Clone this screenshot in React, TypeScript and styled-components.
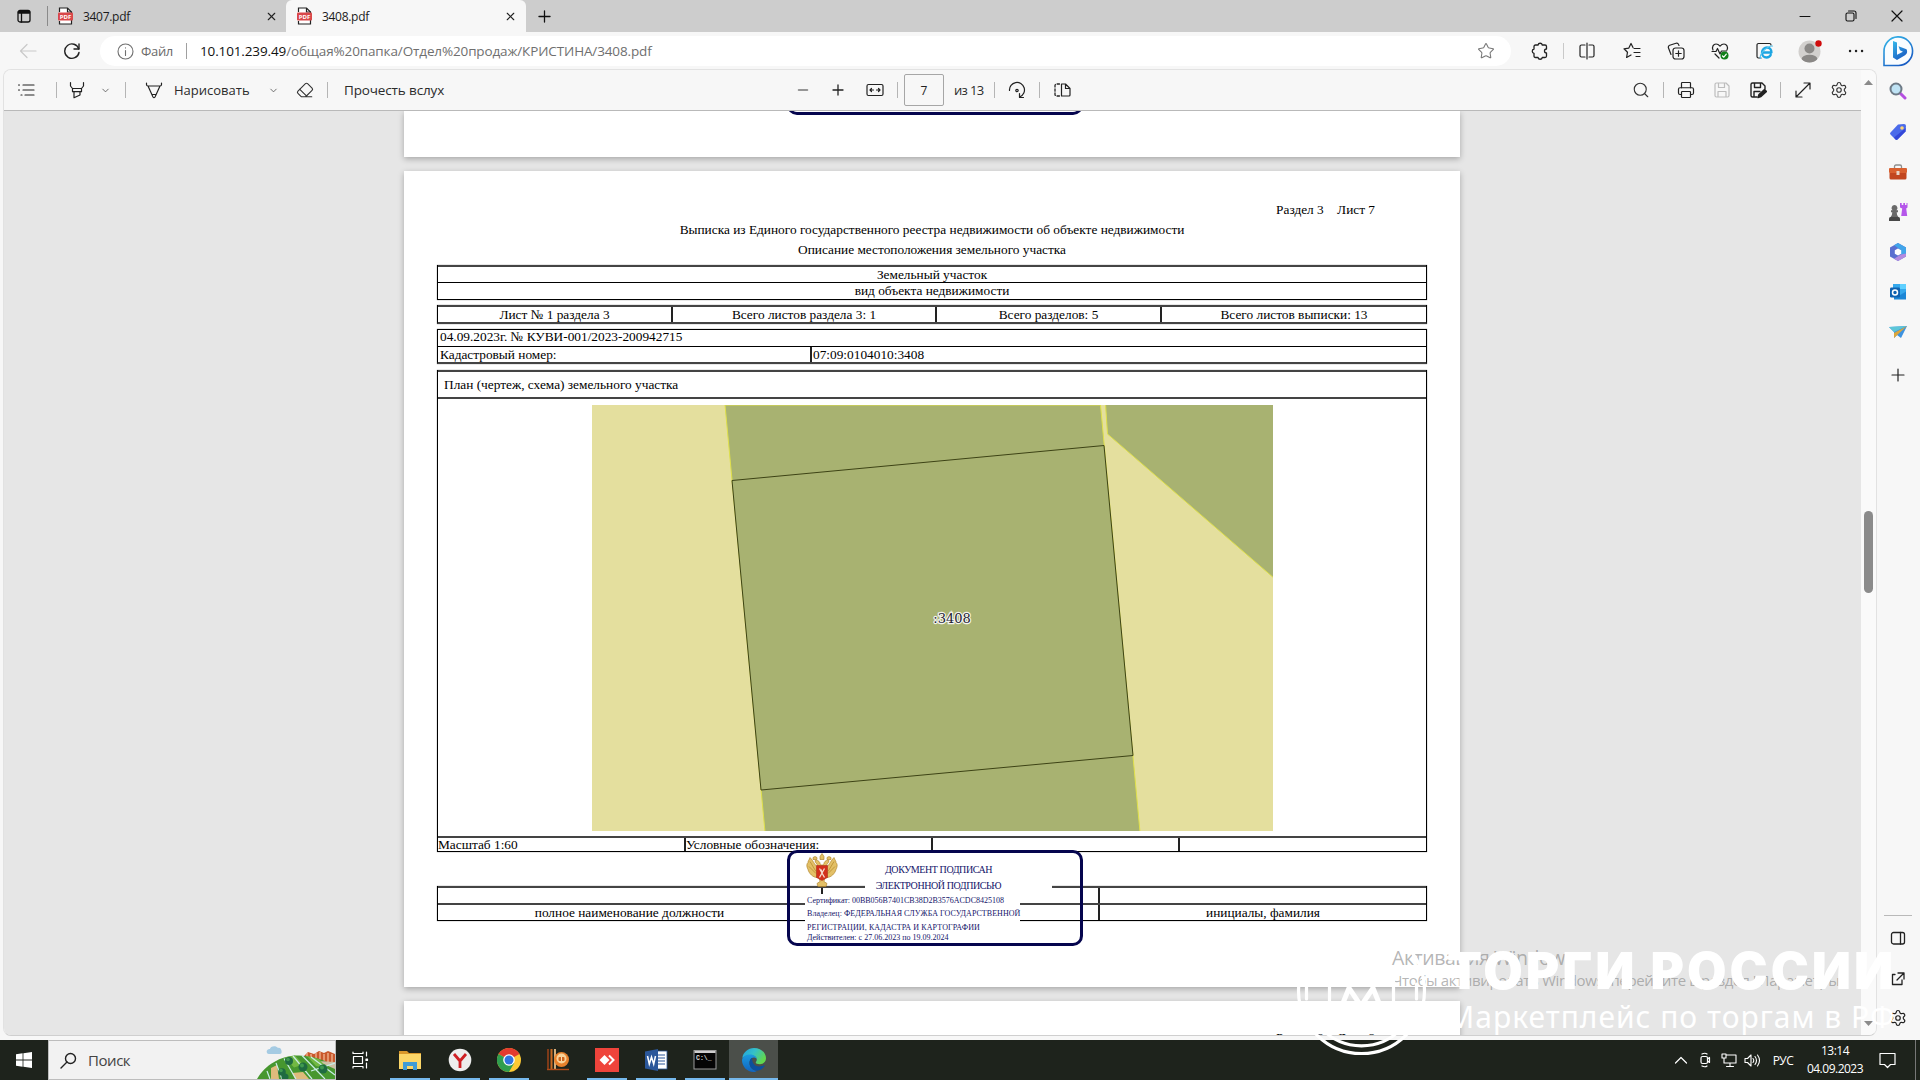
import React from 'react';
import styled, { createGlobalStyle } from 'styled-components';
import { Search, Printer, Settings, Star, ChevronDown, Eraser, X, Plus } from 'lucide-react';

const Global = createGlobalStyle`
  html, body { margin: 0; padding: 0; overflow: hidden; background: #f7f7f7; }
  * { box-sizing: border-box; }
  svg { display: block; flex: none; }
`;

const ui = `"Open Sans", "Noto Sans", sans-serif`;
const serif = `"Liberation Serif", "Times New Roman", serif`;

const Desktop = styled.div`
  position: relative;
  width: 1920px;
  height: 1080px;
  overflow: hidden;
  display: flex;
  flex-direction: column;
  font-family: ${ui};
  color: #222;
`;

/* ---------- shared ---------- */
const Slot = styled.div<{ $w: number; $ml?: number; $mt?: number }>`
  width: ${p => p.$w}px;
  margin-left: ${p => p.$ml ?? 0}px;
  margin-top: ${p => p.$mt ?? 0}px;
  flex: none;
  display: flex;
  align-items: center;
  justify-content: center;
`;
const Sep = styled.div<{ $ml?: number; $h?: number; $c?: string }>`
  width: 1px;
  height: ${p => p.$h ?? 16}px;
  margin-left: ${p => p.$ml ?? 0}px;
  background: ${p => p.$c ?? '#b5b5b5'};
  flex: none;
`;
const Label = styled.span<{ $ml?: number; $w?: number; $size?: number; $ls?: number; $c?: string; $grow?: boolean }>`
  margin-left: ${p => p.$ml ?? 0}px;
  width: ${p => (p.$w ? p.$w + 'px' : 'auto')};
  font-size: ${p => p.$size ?? 12}px;
  letter-spacing: ${p => p.$ls ?? 0}px;
  color: ${p => p.$c ?? '#2b2b2b'};
  white-space: pre;
  flex: ${p => (p.$grow ? '1' : 'none')};
`;
const Glyph = ({ s = 18, c = '#222', w = 1.2, children }: { s?: number; c?: string; w?: number; children: React.ReactNode }) => (
  <svg width={s} height={s} viewBox={`0 0 ${s} ${s}`} fill="none" stroke={c} strokeWidth={w} strokeLinecap="round" strokeLinejoin="round">
    {children}
  </svg>
);

/* ---------- tabs ---------- */
const TabStrip = styled.div`
  height: 32px;
  background: #cdcdcd;
  display: flex;
  align-items: center;
  flex: none;
`;
const Tab = styled.div<{ $active?: boolean; $w: number; $pl: number; $pr: number }>`
  width: ${p => p.$w}px;
  height: 32px;
  padding: 0 ${p => p.$pr}px 0 ${p => p.$pl}px;
  display: flex;
  align-items: center;
  border-radius: 6px 6px 0 0;
  background: ${p => (p.$active ? '#f7f7f7' : 'transparent')};
`;
const TabTitle = styled.span`
  margin-left: 10px;
  flex: 1;
  font-size: 12px;
  letter-spacing: -0.3px;
  color: #1b1b1b;
`;
const PdfIcon = () => (
  <svg width="15" height="18" viewBox="0 0 15 18">
    <path d="M1.500 5V1h8l4 4v12h-12v-3" fill="#fff" stroke="#222" strokeWidth="1.200" />
    <path d="M9.500 1v4h4" fill="none" stroke="#222" strokeWidth="1.200" />
    <rect x="0" y="5.500" width="15" height="8" rx="1" fill="#d9484a" />
    <text x="7.500" y="11.800" fontSize="6" fontWeight="700" fill="#fff" textAnchor="middle" fontFamily="Open Sans">PDF</text>
  </svg>
);

/* ---------- address bar ---------- */
const AddressRow = styled.div`
  height: 37px;
  background: #f7f7f7;
  display: flex;
  align-items: center;
  flex: none;
`;
const AddressField = styled.div`
  width: 1411px;
  height: 30px;
  margin-left: 18px;
  border-radius: 15px;
  background: #fff;
  display: flex;
  align-items: center;
  margin-top: 1px;
`;
const Avatar = () => (
  <svg width="26" height="24" viewBox="0 0 26 24">
    <defs><clipPath id="av"><circle cx="11.500" cy="12.500" r="11" /></clipPath></defs>
    <circle cx="11.500" cy="12.500" r="11" fill="#d2d0ce" />
    <g clipPath="url(#av)" fill="#8a8886"><circle cx="11.500" cy="9.500" r="5" /><ellipse cx="11.500" cy="20" rx="8" ry="4.300" /></g>
    <circle cx="20.500" cy="4.500" r="3.200" fill="#d00b0b" />
  </svg>
);

/* ---------- body ---------- */
const Body = styled.div`
  height: 971px;
  display: flex;
  flex: none;
  background: #f7f7f7;
`;
const Viewer = styled.div`
  width: 1874px;
  height: 967px;
  margin-left: 3px;
  border: 1px solid #e2e2e2;
  border-bottom-color: #cfcfcf;
  border-radius: 8px;
  overflow: hidden;
  display: flex;
  flex: none;
`;
const ViewerMain = styled.div`
  width: 1857px;
  display: flex;
  flex-direction: column;
`;
const PdfBar = styled.div`
  height: 41px;
  border-bottom: 1px solid #b9b9b9;
  background: #f7f7f7;
  display: flex;
  align-items: center;
  flex: none;
`;
const PageInput = styled.div`
  width: 40px;
  height: 32px;
  margin-left: 6px;
  border: 1px solid #a6a6a6;
  border-radius: 2px;
  display: flex;
  align-items: center;
  justify-content: center;
  font-size: 12px;
  flex: none;
`;
const Canvas = styled.div`
  flex: 1;
  min-height: 0;
  overflow: hidden;
  background: #e6e6e6;
  padding-left: 400px;
`;
const Scrollbar = styled.div`
  flex: 1;
  background: #fafafa;
  display: flex;
  flex-direction: column;
  align-items: center;
  justify-content: space-between;
  padding: 10px 0 9px;
`;
const Thumb = styled.div`
  width: 9px;
  height: 82px;
  margin-bottom: 3px;
  border-radius: 5px;
  background: #8b8b8b;
`;

/* ---------- document ---------- */
const Sheet = styled.div<{ $h: number; $pt?: number }>`
  position: relative;
  width: 1056px;
  height: ${p => p.$h}px;
  margin-bottom: 14px;
  padding: ${p => p.$pt ?? 29}px 33px 0 33px;
  background: #fff;
  box-shadow: 0 2px 6px rgba(0, 0, 0, 0.28);
  font-family: ${serif};
  font-size: 13.33px;
  color: #000;
`;
const SheetNo = styled.div`
  height: 20px;
  line-height: 20px;
  padding-right: 52px;
  text-align: right;
  white-space: pre;
`;
const Heading = styled.div`
  height: 20px;
  line-height: 20px;
  text-align: center;
`;
const Table = styled.div<{ $mt: number; $bb?: number }>`
  margin-top: ${p => p.$mt}px;
  border: 0 solid #222;
  border-left: 1px solid #000;
  border-right: 1px solid #000;
  border-bottom: ${p => p.$bb ?? 1}px solid ${p => ((p.$bb ?? 1) > 1 ? '#444' : '#000')};
  box-shadow: 0 0 1px rgba(0, 0, 0, 0.55);
  display: flex;
  flex-direction: column;
`;
const Row = styled.div<{ $h: number; $b?: number }>`
  height: ${p => p.$h}px;
  border-top: ${p => p.$b ?? 1}px solid ${p => ((p.$b ?? 1) > 1 ? '#444' : '#000')};
  display: flex;
`;
const Cell = styled.div<{ $w?: number; $left?: number; $up?: number }>`
  ${p => (p.$w ? `width: ${p.$w}px; flex: none;` : 'flex: 1;')}
  padding-left: ${p => p.$left ?? 0}px;
  padding-bottom: ${p => p.$up ?? 0}px;
  display: flex;
  align-items: center;
  line-height: 14px;
  justify-content: ${p => (p.$left === undefined ? 'center' : 'flex-start')};
  white-space: nowrap;
  & + & { border-left: 2px solid #222; }
`;
const PlanCell = styled.div`
  flex: 1;
  padding: 6px 0 0 154px;
`;
const Stamp = styled.div`
  position: absolute;
  left: 383px;
  top: 679px;
  width: 296px;
  height: 96px;
  border: 3px solid #05054e;
  border-radius: 10px;
  color: #14146a;
`;
const StampTitle = styled.div`
  position: absolute;
  left: 75px;
  top: 9px;
  width: 187px;
  height: 32px;
  padding-right: 40px;
  background: #fff;
  font-size: 10px;
  letter-spacing: -0.42px;
  line-height: 16px;
  text-align: center;
  white-space: nowrap;
`;
const StampInfo = styled.div`
  position: absolute;
  left: 15px;
  top: 41px;
  width: 215px;
  height: 48px;
  padding: 1px 0 0 2px;
  background: #fff;
  font-size: 8px;
  white-space: nowrap;
`;
const StampLine = styled.div<{ $h: number; $ls?: number }>`
  height: ${p => p.$h}px;
  line-height: 12px;
  letter-spacing: ${p => p.$ls ?? 0}px;
`;
const PrevStamp = styled.div`
  position: absolute;
  left: 383px;
  top: -60px;
  width: 296px;
  height: 64px;
  border: 3px solid #05054e;
  border-radius: 10px;
`;
const EmblemBox = styled.div`
  position: absolute;
  left: 16px;
  top: 0;
`;

const Emblem = () => (
  <svg width="32" height="35" viewBox="0 0 32 34">
    <g fill="#e3c067" stroke="#a8791d" strokeWidth=".6">
      <path d="M13 14C9 13 8 8 4 4c-1 3-2 3-2 5-2 2-1 5 0 7 1 4 5 8 9 8z" />
      <path d="M19 14c4-1 5-6 9-10 1 3 2 3 2 5 2 2 1 5 0 7-1 4-5 8-9 8z" />
      <path d="M12 14c0-4-3-4-3-7 2-1 5 1 5 3l2 2 2-2c0-2 3-4 5-3 0 3-3 3-3 7z" />
      <path d="M14 3l2-3 2 3v3h-4zM7 4l2-1 2 1v2H7zM21 4l2-1 2 1v2h-4z" />
      <path d="M13 23h6l-1 5 3 2-1 3h-8l-1-3 3-2z" />
      <path d="M4 8l6 10M3 13l7 7M28 8l-6 10M29 13l-7 7" fill="none" />
    </g>
    <path d="M10.500 12h11v12l-5.500 3-5.500-3z" fill="#d3301c" stroke="#a32313" strokeWidth=".5" />
    <path d="M13.500 15l5 9M18.500 15l-5 9M15 16l1 3" stroke="#f6dcd0" strokeWidth="1.300" />
  </svg>
);

const PlotMap = () => (
  <svg width="681" height="426" viewBox="592 405 681 426">
    <rect x="592" y="405" width="681" height="426" fill="#e4df9e" />
    <path d="M725 405L765 832H1140L1100.500 405z" fill="#a8b271" stroke="#dfe04a" strokeWidth="1" />
    <path d="M1105.500 404L1107.500 434L1275 579V404z" fill="#a8b271" stroke="#dfe04a" strokeWidth="1" />
    <path d="M732 480.500L1104 445.500L1133 755.500L761 790z" fill="#a8b271" stroke="#3d4315" strokeWidth="1" />
    <text x="952" y="622.500" textAnchor="middle" fontFamily="DejaVu Serif" fontSize="13" fill="#1b1b33" stroke="#f4f4ee" strokeWidth="2.400" paintOrder="stroke">:3408</text>
  </svg>
);

/* ---------- side bar ---------- */
const SideBar = styled.div`
  width: 41px;
  height: 967px;
  display: flex;
  flex-direction: column;
  align-items: center;
`;
const SideItem = styled.div<{ $h: number }>`
  height: ${p => p.$h}px;
  display: flex;
  align-items: center;
  justify-content: center;
  flex: none;
`;
const SideRule = styled.div`
  width: 28px;
  height: 1px;
  margin-top: 516px;
  background: #b9b9b9;
  flex: none;
`;

/* ---------- taskbar ---------- */
const Taskbar = styled.div`
  height: 40px;
  background: #1e231c;
  display: flex;
  align-items: stretch;
  flex: none;
`;
const StartButton = styled.div`
  width: 48px;
  display: flex;
  align-items: center;
  justify-content: center;
`;
const SearchBox = styled.div`
  width: 288px;
  background: #f2f2f2;
  border: 1px solid #bdbdbd;
  display: flex;
  align-items: center;
  padding-left: 11px;
`;
const AppButton = styled.div<{ $active?: boolean; $run?: boolean; $w?: number; $line?: number }>`
  width: ${p => p.$w ?? 49}px;
  display: flex;
  flex-direction: column;
  align-items: center;
  justify-content: space-between;
  background: ${p => (p.$active ? '#4b4f4a' : 'transparent')};
  padding-top: 8px;
  &::after {
    content: '';
    width: ${p => p.$line ?? 40}px;
    height: 2px;
    background: ${p => (p.$run ? '#76b9ed' : 'transparent')};
  }
`;
const Clock = styled.div`
  width: 60px;
  margin-left: 10px;
  display: flex;
  flex-direction: column;
  align-items: center;
  padding-top: 2px;
  font-size: 12px;
  line-height: 18px;
  letter-spacing: -0.5px;
  color: #fff;
`;

/* ---------- overlays ---------- */
const Activation = styled.div`
  position: absolute;
  left: 1392px;
  top: 945px;
  color: rgba(135, 135, 135, 0.62);
  white-space: nowrap;
`;
const ActTitle = styled.div`
  font-size: 19.5px;
  line-height: 26px;
  letter-spacing: -0.45px;
`;
const ActText = styled.div`
  font-size: 15px;
  line-height: 18px;
  letter-spacing: -0.35px;
`;
const Brand = styled.div`
  position: absolute;
  left: 1447px;
  top: 940px;
  color: #fff;
  white-space: nowrap;
`;
const BrandName = styled.div`
  font-family: Inter, sans-serif;
  font-weight: 900;
  font-size: 51px;
  line-height: 62px;
  letter-spacing: 3px;
`;
const BrandSub = styled.div`
  margin-top: -3px;
  font-family: "Noto Sans", sans-serif;
  font-size: 30px;
  line-height: 36px;
  letter-spacing: 1px;
`;
const BrandMark = styled.div`
  position: absolute;
  left: 1296px;
  top: 924px;
`;

const appIcons = {
  explorer: (
    <svg width="24" height="24" viewBox="0 0 24 24"><path d="M1 3h8l2 2h12v5H1z" fill="#d9982b" /><rect x="1" y="6" width="22" height="15" fill="#fbd668" /><path d="M5 22v-8h14v8h-4v-4H9v4z" fill="#3f9bd5" /></svg>
  ),
  yandex: (
    <svg width="24" height="24" viewBox="0 0 24 24"><circle cx="12" cy="12" r="11.300" fill="#ededed" /><path d="M6 6l6 7 6-7M12 13v7" stroke="#cf1f24" strokeWidth="2.800" fill="none" /></svg>
  ),
  chrome: (
    <svg width="24" height="24" viewBox="0 0 24 24">
      <circle cx="12" cy="12" r="12" fill="#fcc934" />
      <path d="M12 12L1.600 6A12 12 0 0122.400 6z" fill="#e33b2e" /><path d="M1.600 6A12 12 0 0012 24l5.200-9L12 12z" fill="#2f9e4f" />
      <circle cx="12" cy="12" r="5.800" fill="#fff" /><circle cx="12" cy="12" r="4.500" fill="#2f74e0" />
    </svg>
  ),
  player: (
    <svg width="24" height="24" viewBox="0 0 24 24">
      <path d="M2 1v20" stroke="#7c3a18" strokeWidth="2" /><path d="M5.500 1v20" stroke="#c96a22" strokeWidth="2" /><path d="M9 1v20" stroke="#e8c08a" strokeWidth="1.800" />
      <circle cx="15.500" cy="11.500" r="7.500" fill="#e8812c" /><circle cx="15.500" cy="10.500" r="5" fill="#f8d39a" /><rect x="12.500" y="9" width="6" height="4" rx="1" fill="#d0641c" /><path d="M15.500 9v4" stroke="#f8e0b8" />
      <path d="M1 21.500h22" stroke="#b04a18" strokeWidth="1.400" />
    </svg>
  ),
  anydesk: (
    <svg width="24" height="24" viewBox="0 0 24 24"><rect width="24" height="24" fill="#ef443b" /><path d="M9.500 7l5 5-5 5-5-5z" fill="#fff" /><path d="M14 7.500l4.500 4.500-4.500 4.500" stroke="#fff" strokeWidth="2" fill="none" /></svg>
  ),
  word: (
    <svg width="24" height="24" viewBox="0 0 24 24"><rect x="12" y="3" width="11" height="18" fill="#fff" stroke="#2b579a" strokeWidth=".8" /><path d="M14 7h7M14 10h7M14 13h7M14 16h7" stroke="#2b579a" strokeWidth="1.200" /><path d="M1 3.500L14 1v22L1 20.500z" fill="#2b579a" /><path d="M3.500 8l1.800 8 2.200-7 2.200 7 1.800-8" stroke="#fff" strokeWidth="1.500" fill="none" /></svg>
  ),
  cmd: (
    <svg width="24" height="24" viewBox="0 0 24 24"><rect x="1" y="2.500" width="22" height="18.500" fill="#050505" stroke="#9c9c9c" /><path d="M1.500 4h21" stroke="#cfcfcf" strokeWidth="2" /><text x="3" y="12" fontSize="6.500" fontWeight="700" fill="#ddd" fontFamily="Liberation Mono">C:\_</text></svg>
  ),
  edge: (
    <svg width="24" height="24" viewBox="0 0 24 24">
      <defs>
        <linearGradient id="e1" x1="0" x2="1" y2=".5"><stop offset="0" stopColor="#1f9fe0" /><stop offset=".5" stopColor="#35c1c9" /><stop offset="1" stopColor="#62d84e" /></linearGradient>
        <linearGradient id="e2" x1="0" y1="0" x2="0" y2="1"><stop offset="0" stopColor="#1b9be0" /><stop offset="1" stopColor="#1264bd" /></linearGradient>
      </defs>
      <path d="M.3 10C1 4.500 6 0 12 0c7 0 12 4.800 12 10.200 0 3.600-2.800 6-6 6-3 0-4.600-1-4.200-2 .2-.6 1-1.100 1-2.700C14.800 9 12 7.500 9 7.500 5 7.500 1.500 8.500.3 10z" fill="url(#e1)" />
      <path d="M0 12C.5 8.500 4 6.500 8 6.500c4.500 0 6.800 2.500 6.800 5-.5-1.300-1.600-2-2.800-2-3 0-4.500 3-4.500 5.500 0 4 3 7.500 7.500 7.700-1 1-2 1.200-3.500 1.200C5 23.900 0 18.500 0 12z" fill="url(#e2)" />
      <path d="M7.500 15c0-2.500 1-4.300 2.800-5.200-.8 4.700 2.200 8.700 6.700 8.700 2 0 3.800-.6 5-1.200.6-.2.900.2.600.6-1.500 2.500-4.100 4.800-7.600 4.800-4.500-.2-7.500-3.700-7.500-7.700z" fill="#0d4f9c" />
    </svg>
  )
};

const FieldArt = () => (
  <svg width="78" height="38" viewBox="0 0 78 38">
    <path d="M10 12c-1-3 1-4 3-4 0-3 6-4 8-1 3-1 4 3 3.500 5q-.5 1-2 1H12q-1.500 0-2-1z" fill="#a5cbe3" />
    <path d="M47 15l4-4 6 2 5-3 5 2 4-2 7 3v12H64z" fill="#c9582c" />
    <path d="M50 12v4M54 13v5M59 12v6M63 11v8M67 13v7M71 12v9M75 13v8" stroke="#efb08b" strokeWidth="1.400" />
    <path d="M0 38C8 24 24 14 42 14.500 58 15 70 20 78 26v12z" fill="#47972f" />
    <path d="M60 20l18 1v7z" fill="#cdbfa4" />
    <path d="M28 16.500l10-2 8 9-9 3zM50 15l12 3 8 9-11-2z" fill="#72b843" />
    <path d="M14 27l6-3 2 14h-8zM35 32l11-1 6 7H38z" fill="#dfbb7c" />
    <path d="M10 30l3 8M19 22l6 16M27 17.500l12 20.500M36 15l19 23M45 14.500L68 38M54 16l24 18M54 30l24-8" stroke="#c9ece8" strokeWidth="1.200" fill="none" />
    <g fill="#1f6b41"><circle cx="25" cy="31" r="3.800" /><circle cx="32" cy="20" r="4" /><circle cx="46" cy="26" r="4.500" /><circle cx="66" cy="28" r="4.500" /><circle cx="28" cy="36" r="3.500" /></g>
    <g fill="#3f9a4f"><circle cx="24" cy="29.500" r="1.800" /><circle cx="31" cy="18.500" r="1.800" /><circle cx="45" cy="24.500" r="2" /><circle cx="65" cy="26.500" r="2" /></g>
  </svg>
);

const W = '#fff';

export default function App() {
  return (
    <Desktop>
      <Global />
      <TabStrip>
        <Slot $w={20} $ml={14}>
          <Glyph s={14} c="#111" w={1.3}><rect x="1" y="1.500" width="12" height="11.500" rx="2" /><path d="M1.500 2.500h11v1.500h-11z" fill="#111" /><path d="M4.500 4v9" /></Glyph>
        </Slot>
        <Sep $ml={13} $h={20} $c="#8a8a8a" />
        <Tab $w={238} $pl={10} $pr={8}>
          <PdfIcon /><TabTitle>3407.pdf</TabTitle><X size={13} strokeWidth={2.100} color="#222" />
        </Tab>
        <Tab $active $w={240} $pl={11} $pr={9}>
          <PdfIcon /><TabTitle>3408.pdf</TabTitle><X size={13} strokeWidth={2.100} color="#222" />
        </Tab>
        <Slot $w={20} $ml={8}><Plus size={19} strokeWidth={1.600} color="#111" /></Slot>
        <Slot $w={20} $ml={1241}><Glyph s={12} c="#111" w={1}><path d="M1 6.500h10" /></Glyph></Slot>
        <Slot $w={20} $ml={26}><Glyph s={12} c="#111" w={1.100}><rect x="1" y="3" width="8" height="8" rx="1.500" /><path d="M3.500 1H9a2 2 0 012 2v5.500" /></Glyph></Slot>
        <Slot $w={20} $ml={26}><Glyph s={12} c="#111" w={1.200}><path d="M1 1l10 10M11 1L1 11" /></Glyph></Slot>
      </TabStrip>

      <AddressRow>
        <Slot $w={20} $ml={18}><Glyph s={18} c="#c9c9c9"><path d="M17 9H1.500M8 2.500L1.500 9 8 15.500" /></Glyph></Slot>
        <Slot $w={20} $ml={24}><Glyph s={18} c="#222" w={1.400}><path d="M15.800 7A7.200 7.200 0 1016 10.500" /><path d="M16 2v5h-5" /></Glyph></Slot>
        <AddressField>
          <Slot $w={18} $ml={16}><Glyph s={17} c="#707070" w={1.100}><circle cx="8.500" cy="8.500" r="7.500" /><path d="M8.500 7.500v5M8.500 4.800v.2" /></Glyph></Slot>
          <Label $ml={7} $w={45} $size={13} $ls={-0.35} $c="#6a6a6a">Файл</Label>
          <Sep $h={16} $c="#a0a0a0" />
          <Label $ml={13} $size={13.5} $ls={-0.13} $c="#111">10.101.239.49</Label>
          <Label $size={13.5} $ls={-0.13} $c="#6f6f6f" $grow>/общая%20папка/Отдел%20продаж/КРИСТИНА/3408.pdf</Label>
          <Slot $w={50}><Star size={18} strokeWidth={1.400} color="#777" /></Slot>
        </AddressField>
        <Slot $w={22} $ml={18}>
          <Glyph s={18} c="#222" w={1.300}><path d="M4.500 3H7a2.200 2.200 0 014.300 0H14q1.500 0 1.500 1.500V7a2 2 0 100 4v3q0 1.500-1.500 1.500h-2.700a2.200 2.200 0 01-4.300 0H4.500Q3 15.500 3 14v-2.700a2.200 2.200 0 010-4.300V4.500Q3 3 4.500 3z" /></Glyph>
        </Slot>
        <Sep $ml={12} $c="#c9c9c9" />
        <Slot $w={20} $ml={13}><Glyph s={18} c="#222"><path d="M7 3H3.500A1.500 1.500 0 002 4.500v9A1.500 1.500 0 003.500 15H7M11 3h3.500A1.500 1.500 0 0116 4.500v9a1.500 1.500 0 01-1.500 1.500H11M9 1v16" /></Glyph></Slot>
        <Slot $w={20} $ml={25}><Glyph s={18} c="#222"><path d="M10 5.500L8 1.500 5.700 6.200 1 6.800l3.500 3.400L3.600 15.500 8 13M11 6.500h6M11 10.500h6M13 14.500h4" /></Glyph></Slot>
        <Slot $w={20} $ml={24}><Glyph s={18} c="#222"><rect x="6" y="6" width="11" height="11" rx="2.500" /><path d="M11.500 8.800v5.400M8.800 11.500h5.400M4 12.500L1.500 6A2 2 0 012.700 3.300L9 1.200a2 2 0 012.500 1.200l.5 1" /></Glyph></Slot>
        <Slot $w={20} $ml={24}>
          <Glyph s={18} c="#222"><path d="M2 8C.5 5 2.500 2 5 2c2 0 3 1 4 2.200C10 3 11 2 13 2c2.500 0 4.500 3 3 6M1 9.500h4l1.500-3L9 12l1.500-3h5M4 12l4 4" /><circle cx="13.500" cy="13.500" r="4" fill="#12801a" stroke="none" /><path d="M11.500 14l1.300 1.200 2.500-3" stroke="#fff" /></Glyph>
        </Slot>
        <Slot $w={20} $ml={24}>
          <Glyph s={20} c="#222"><path d="M7 17H4.500Q3 17 3 15.500V4a1.500 1.500 0 011.500-1.500h11A1.500 1.500 0 0117 4" /><path d="M8 11.500h9.500c0-3-2-5-4.500-5s-5 2-5 5 2 5 4.500 5c2 0 3.500-1 4.300-2.700" stroke="#1ca5e2" strokeWidth="2.300" /><path d="M6.500 17.500C5 14 12 5 18.500 5" stroke="#54c4f0" strokeWidth="1.200" /></Glyph>
        </Slot>
        <Slot $w={26} $ml={24}><Avatar /></Slot>
        <Slot $w={20} $ml={22}><Glyph s={16} c="#222" w={2.400}><path d="M2 8h.1M8 8h.1M14 8h.1" /></Glyph></Slot>
        <Slot $w={32} $ml={16}>
          <svg width="32" height="32" viewBox="0 0 32 32">
            <defs><linearGradient id="bg" x1="0" y1="0" x2=".6" y2="1"><stop offset="0" stopColor="#36b9ea" /><stop offset="1" stopColor="#1a5ec4" /></linearGradient></defs>
            <path d="M2 30.500V17A14.300 14.300 0 1116.500 30.500z" fill="#fafdff" stroke="url(#bg)" strokeWidth="1.600" />
            <path d="M11 6l4 1.500v12.300l6-3-3-1.500-1.500-4 8 3c1.500 3 0 5-1.500 6L15 25l-4-2.500z" fill="url(#bg)" />
          </svg>
        </Slot>
      </AddressRow>

      <Body>
        <Viewer>
          <ViewerMain>
            <PdfBar>
              <Slot $w={20} $ml={12}><Glyph s={18} c="#222"><path d="M6 4h11M6 9h11M8 14h9M1.500 4h1M1.500 9h1M4 14h1" /></Glyph></Slot>
              <Sep $ml={20} />
              <Slot $w={20} $ml={10}><Glyph s={18} c="#222"><path d="M2.500 1.500V5l2 2.500h9l2-2.500V1.500M4.500 7.500v3.200h9V7.500M6 10.700v6l6-2.700v-3.300" /></Glyph></Slot>
              <Slot $w={12} $ml={12}><ChevronDown size={11} strokeWidth={1.800} color="#555" /></Slot>
              <Sep $ml={14} />
              <Slot $w={20} $ml={18}><Glyph s={18} c="#222"><path d="M1.500 2v1.500c0 1 .5 1.500 1.500 1.500h12c1 0 1.500-.5 1.500-1.500V2M3 5l5 11q1 1.500 2 0l5-11M7 13.500h4" /></Glyph></Slot>
              <Label $ml={10} $w={93} $size={13} $ls={0}>Нарисовать</Label>
              <Slot $w={12}><ChevronDown size={11} strokeWidth={1.800} color="#555" /></Slot>
              <Slot $w={20} $ml={16}><Eraser size={18} strokeWidth={1.500} color="#333" /></Slot>
              <Sep $ml={12} />
              <Label $ml={16} $w={447} $size={13.5} $ls={-0.14}>Прочесть вслух</Label>
              <Slot $w={20} $ml={2}><Glyph s={12} c="#777" w={1.500}><path d="M1.500 6h9" /></Glyph></Slot>
              <Slot $w={20} $ml={15}><Glyph s={12} c="#222" w={1.300}><path d="M1 6h10M6 1v10" /></Glyph></Slot>
              <Slot $w={20} $ml={17}><Glyph s={18} c="#222"><rect x="1" y="3.500" width="16" height="11" rx="1.500" /><path d="M4 9h3.500M10.500 9H14M5.500 7.500L4 9l1.500 1.500M12.500 7.500L14 9l-1.500 1.500" /></Glyph></Slot>
              <Sep $ml={12} />
              <PageInput>7</PageInput>
              <Label $ml={10} $w={40} $size={13} $ls={-0.65}>из 13</Label>
              <Sep />
              <Slot $w={20} $ml={12}><Glyph s={18} c="#222"><path d="M1.500 9.500A7.500 7.500 0 1112 15.800M11.500 12.500v4h4" /><circle cx="9" cy="9.500" r="1.200" /></Glyph></Slot>
              <Sep $ml={12} />
              <Slot $w={20} $ml={12}><Glyph s={18} c="#222"><path d="M8.500 3v12h7.500q1 0 1-1V7.500L12.500 3zM12.500 3v4.500H17" /><path d="M6.500 3H3.500A1.500 1.500 0 002 4.500v9A1.500 1.500 0 003.500 15h3" strokeDasharray="2.400 1.800" strokeWidth="1.300" /></Glyph></Slot>
              <Slot $w={20} $ml={559}><Search size={18} strokeWidth={1.500} color="#333" /></Slot>
              <Sep $ml={12} />
              <Slot $w={20} $ml={12}><Printer size={18} strokeWidth={1.600} color="#222" /></Slot>
              <Slot $w={20} $ml={16}><Glyph s={18} c="#bdbdbd"><path d="M3.500 2H13l3 3v9.500q0 1.500-1.500 1.500h-11Q2 16 2 14.500v-11Q2 2 3.500 2zM5.500 2v4.500h6V2M5 16v-5.500h8V16" /></Glyph></Slot>
              <Slot $w={20} $ml={16}><Glyph s={18} c="#222" w={1.400}><path d="M8 16H3.500Q2 16 2 14.500v-11Q2 2 3.500 2H13l3 3v3M5.500 2v4.500h6V2M5 16v-5.500h6" /><path d="M9 16.500l1-3 5.500-5 2 2-5.500 5z" fill="#222" /></Glyph></Slot>
              <Sep $ml={12} />
              <Slot $w={20} $ml={12}><Glyph s={18} c="#222"><path d="M2.500 15.500l13-13M10 2h6v6M8 16H2v-6" /></Glyph></Slot>
              <Slot $w={20} $ml={16}><Settings size={18} strokeWidth={1.500} color="#333" /></Slot>
            </PdfBar>
            <Canvas>
              <Sheet $h={46} $pt={0}><PrevStamp /></Sheet>
              <Sheet $h={816}>
                <SheetNo>{'Раздел 3    Лист 7'}</SheetNo>
                <Heading>Выписка из Единого государственного реестра недвижимости об объекте недвижимости</Heading>
                <Heading>Описание местоположения земельного участка</Heading>
                <Table $mt={5}>
                  <Row $h={17} $b={2}><Cell>Земельный участок</Cell></Row>
                  <Row $h={17}><Cell>вид объекта недвижимости</Cell></Row>
                </Table>
                <Table $mt={5} $bb={2}>
                  <Row $h={17} $b={2}>
                    <Cell $w={233}>Лист № 1 раздела 3</Cell><Cell $w={264}>Всего листов раздела 3: 1</Cell><Cell $w={225}>Всего разделов: 5</Cell><Cell>Всего листов выписки: 13</Cell>
                  </Row>
                </Table>
                <Table $mt={5} $bb={2}>
                  <Row $h={17}><Cell $left={2} $up={2}>04.09.2023г. № КУВИ-001/2023-200942715</Cell></Row>
                  <Row $h={16}><Cell $w={372} $left={2}>Кадастровый номер:</Cell><Cell $left={1}>07:09:0104010:3408</Cell></Row>
                </Table>
                <Table $mt={6}>
                  <Row $h={27} $b={2}><Cell $left={6}>План (чертеж, схема) земельного участка</Cell></Row>
                  <Row $h={439} $b={2}><PlanCell><PlotMap /></PlanCell></Row>
                  <Row $h={15} $b={2}><Cell $w={246} $left={0}>Масштаб 1:60</Cell><Cell $w={247} $left={0}>Условные обозначения:</Cell><Cell $w={247} /><Cell /></Row>
                </Table>
                <Table $mt={34}>
                  <Row $h={17} $b={2}><Cell $w={383} /><Cell $w={277} /><Cell /></Row>
                  <Row $h={17} $b={2}><Cell $w={383}>полное наименование должности</Cell><Cell $w={277} /><Cell>инициалы, фамилия</Cell></Row>
                </Table>
                <Stamp>
                  <StampTitle>ДОКУМЕНТ ПОДПИСАН<br />ЭЛЕКТРОННОЙ ПОДПИСЬЮ</StampTitle>
                  <StampInfo>
                    <StampLine $h={13}>Сертификат: 00BB056B7401CB38D2B3576ACDC8425108</StampLine>
                    <StampLine $h={14} $ls={0.04}>Владелец: ФЕДЕРАЛЬНАЯ СЛУЖБА ГОСУДАРСТВЕННОЙ</StampLine>
                    <StampLine $h={10} $ls={0.11}>РЕГИСТРАЦИИ, КАДАСТРА И КАРТОГРАФИИ</StampLine>
                    <StampLine $h={10}>Действителен: с 27.06.2023 по 19.09.2024</StampLine>
                  </StampInfo>
                  <EmblemBox><Emblem /></EmblemBox>
                </Stamp>
              </Sheet>
              <Sheet $h={400} $pt={27}><SheetNo>{'Раздел 3    Лист 8'}</SheetNo></Sheet>
            </Canvas>
          </ViewerMain>
          <Scrollbar>
            <svg width="9" height="5"><path d="M0 5L4.500 0L9 5z" fill="#8b8b8b" /></svg>
            <Thumb />
            <svg width="9" height="5"><path d="M0 0L4.500 5L9 0z" fill="#8b8b8b" /></svg>
          </Scrollbar>
        </Viewer>
        <SideBar>
          <SideItem $h={43}>
            <svg width="18" height="18" viewBox="0 0 18 18"><path d="M11 11l5 5" stroke="#b44fe0" strokeWidth="3" strokeLinecap="round" /><circle cx="7" cy="7" r="5.500" fill="#bfe3f5" stroke="#6d7a86" strokeWidth="2" /></svg>
          </SideItem>
          <SideItem $h={40}>
            <svg width="18" height="18" viewBox="0 0 18 18"><path d="M9 1.500L15 1q2 0 2 2l-.5 5.500L8.500 16.500q-1 .8-2 0L1.500 11.500q-1-1 0-2z" fill="#4b6bea" /><path d="M5 14.500L16.800 5l-.3 3.500-8 8q-1 .8-2 0z" fill="#3448d8" /><circle cx="13" cy="5" r="1.800" fill="#ffd476" /></svg>
          </SideItem>
          <SideItem $h={40}>
            <svg width="20" height="18" viewBox="0 0 20 18"><path d="M6.500 5V3.500q0-1.500 1.500-1.500h4q1.500 0 1.500 1.500V5" stroke="#8e8e8e" strokeWidth="1.300" fill="none" /><rect x="1.500" y="9" width="17" height="7.500" rx="1.500" fill="#c2461f" /><rect x="1" y="5" width="18" height="5" rx="1" fill="#d9602f" /><rect x="8.500" y="8" width="3" height="4" fill="#e8d5c8" /></svg>
          </SideItem>
          <SideItem $h={40}>
            <svg width="20" height="20" viewBox="0 0 20 20"><path d="M12 1h1.700v2h1.600V1h1.700v2h1.500V1h1v4.500l-1.300 1 1 7.500h-6l1-7.500L12 5.500z" fill="#b557ea" /><path d="M6.500 3a3 3 0 012 5.200H10v2H8.700q0 3 1.800 5H2.500q1.800-2 1.800-5H3v-2h1.500A3 3 0 016.500 3z" fill="#6a6a6a" /><path d="M1 19v-2.500q0-1.500 1.500-1.500h8q1.500 0 1.500 1.500V19z" fill="#484848" /></svg>
          </SideItem>
          <SideItem $h={40}>
            <svg width="18" height="20" viewBox="0 0 18 20"><path d="M9 1l8 4.500v9L9 19l-8-4.500v-9z" fill="#5a6fd0" /><path d="M9 1l8 4.500v6L12 13V8L5 3.300z" fill="#41a5ea" /><path d="M17 11.500v3L9 19l-4-2.300 7-4.200z" fill="#b38be0" /><path d="M9 6.500l3.200 1.800v3.500L9 13.500l-3.200-1.800V8.300z" fill="#fff" /></svg>
          </SideItem>
          <SideItem $h={40}>
            <svg width="18" height="18" viewBox="0 0 18 18"><path d="M4 1h13v8l-6.500 4L4 9z" fill="#35a8ec" /><path d="M11 1h6v5h-6z" fill="#5fd0ff" /><path d="M5 16.500V9l6 3 6-3.500v8z" fill="#1b86d6" /><rect x="1" y="4.500" width="10" height="10" rx="1.200" fill="#0f62b0" /><circle cx="6" cy="9.500" r="2.500" fill="none" stroke="#fff" strokeWidth="1.500" /></svg>
          </SideItem>
          <SideItem $h={39}>
            <svg width="18" height="16" viewBox="0 0 18 16"><path d="M0 3l18-1-6 12-4-3-3 3V8z" fill="#3d92e0" /><path d="M0 3l18-1L5 8z" fill="#5cc6d8" /><path d="M18 2L5 9v5z" fill="#dca63a" /></svg>
          </SideItem>
          <SideItem $h={48}><Glyph s={14} c="#222"><path d="M1 7h12M7 1v12" /></Glyph></SideItem>
          <SideRule />
          <SideItem $h={43}><Glyph s={16} c="#222" w={1.300}><rect x="1.500" y="2.500" width="13" height="11.500" rx="2" /><path d="M10.500 2.500V14" /></Glyph></SideItem>
          <SideItem $h={39}><Glyph s={14} c="#222" w={1.300}><path d="M4 2.500H1.500v10H11V8M7 1h6v6M13 1L6 8" /></Glyph></SideItem>
          <SideItem $h={40}><Settings size={18} strokeWidth={1.600} color="#222" /></SideItem>
        </SideBar>
      </Body>

      <Taskbar>
        <StartButton><svg width="16" height="16" viewBox="0 0 16 16" fill={W}><path d="M0 2.200L6.600 1.300v6.300H0zM7.400 1.200L16 0v7.600H7.400zM0 8.400h6.600v6.300L0 13.800zM7.400 8.400H16V16l-8.600-1.200z" /></svg></StartButton>
        <SearchBox>
          <Glyph s={17} c="#222" w={1.400}><circle cx="10.500" cy="6.500" r="5" /><path d="M7 10l-6 6" /></Glyph>
          <Label $ml={11} $w={169} $size={15} $ls={-0.45} $c="#444">Поиск</Label>
          <FieldArt />
        </SearchBox>
        <Slot $w={48}><Glyph s={18} c={W} w={1.200}><path d="M2 1v1.500h10V1M2 17v-1.500h10V17M2.500 5.500h9v7h-9zM15.500 1v4M15.500 12v5" /><rect x="15" y="8" width="1.500" height="1.500" fill={W} /></Glyph></Slot>
        <AppButton $w={51} $run>{appIcons.explorer}</AppButton>
        <AppButton $run>{appIcons.yandex}</AppButton>
        <AppButton $run>{appIcons.chrome}</AppButton>
        <AppButton>{appIcons.player}</AppButton>
        <AppButton $run>{appIcons.anydesk}</AppButton>
        <AppButton $run>{appIcons.word}</AppButton>
        <AppButton $run>{appIcons.cmd}</AppButton>
        <AppButton $w={49} $line={49} $run $active>{appIcons.edge}</AppButton>
        <Slot $w={20} $ml={893}><Glyph s={14} c={W}><path d="M1.500 10L7 4.500 12.500 10" /></Glyph></Slot>
        <Slot $w={16} $ml={6}><Glyph s={16} c={W}><rect x="4" y="4.500" width="6.500" height="7" rx="1.500" /><path d="M10.500 7l2-1.500v5l-2-1.500M5 2q3-1.500 5 0M5 14q3 1.500 5 0" /></Glyph></Slot>
        <Slot $w={18} $ml={6}><Glyph s={17} c={W} w={1.100}><path d="M6 3h10v8H4V8M10 11v3M6.500 14.500h7M2 2h4v4H2zM4 6v2" /></Glyph></Slot>
        <Slot $w={18} $ml={6}><Glyph s={17} c={W} w={1.100}><path d="M1 6.500h2.500L7 3v11L3.500 10.500H1zM9 6.500q1.500 2 0 4M11 4.500q3 4 0 8M13.500 3q4 5.500 0 11" /></Glyph></Slot>
        <Slot $w={24} $ml={10}><Label $size={12} $ls={-0.5} $c={W}>РУС</Label></Slot>
        <Clock><span>13:14</span><span>04.09.2023</span></Clock>
        <Slot $w={20} $ml={12}><Glyph s={17} c={W}><path d="M1 1.500h15v11h-4.500L8.500 15.500 5.500 12.500H1z" /></Glyph></Slot>
        <Slot $w={1} $ml={18}><Sep $h={40} $c="#777" /></Slot>
      </Taskbar>

      <Activation>
        <ActTitle>Активация Windows</ActTitle>
        <ActText>Чтобы активировать Windows, перейдите в раздел "Параметры".</ActText>
      </Activation>
      <BrandMark>
        <svg width="132" height="132" viewBox="0 0 132 132" fill="none" stroke="#fff" strokeWidth="3.200" strokeLinecap="round">
          <circle cx="65.500" cy="66.500" r="63" /><path d="M10.500 75V60M120.500 75V60" /><path d="M25 104a55 55 0 0081 0" />
          <path d="M33.500 52v36M97.500 52v36" /><path d="M45 84l8-20 12 18 12-18 8 20" strokeWidth="5" />
        </svg>
      </BrandMark>
      <Brand>
        <BrandName>ТОРГИ РОССИИ</BrandName>
        <BrandSub>Маркетплейс по торгам в РФ</BrandSub>
      </Brand>
    </Desktop>
  );
}
